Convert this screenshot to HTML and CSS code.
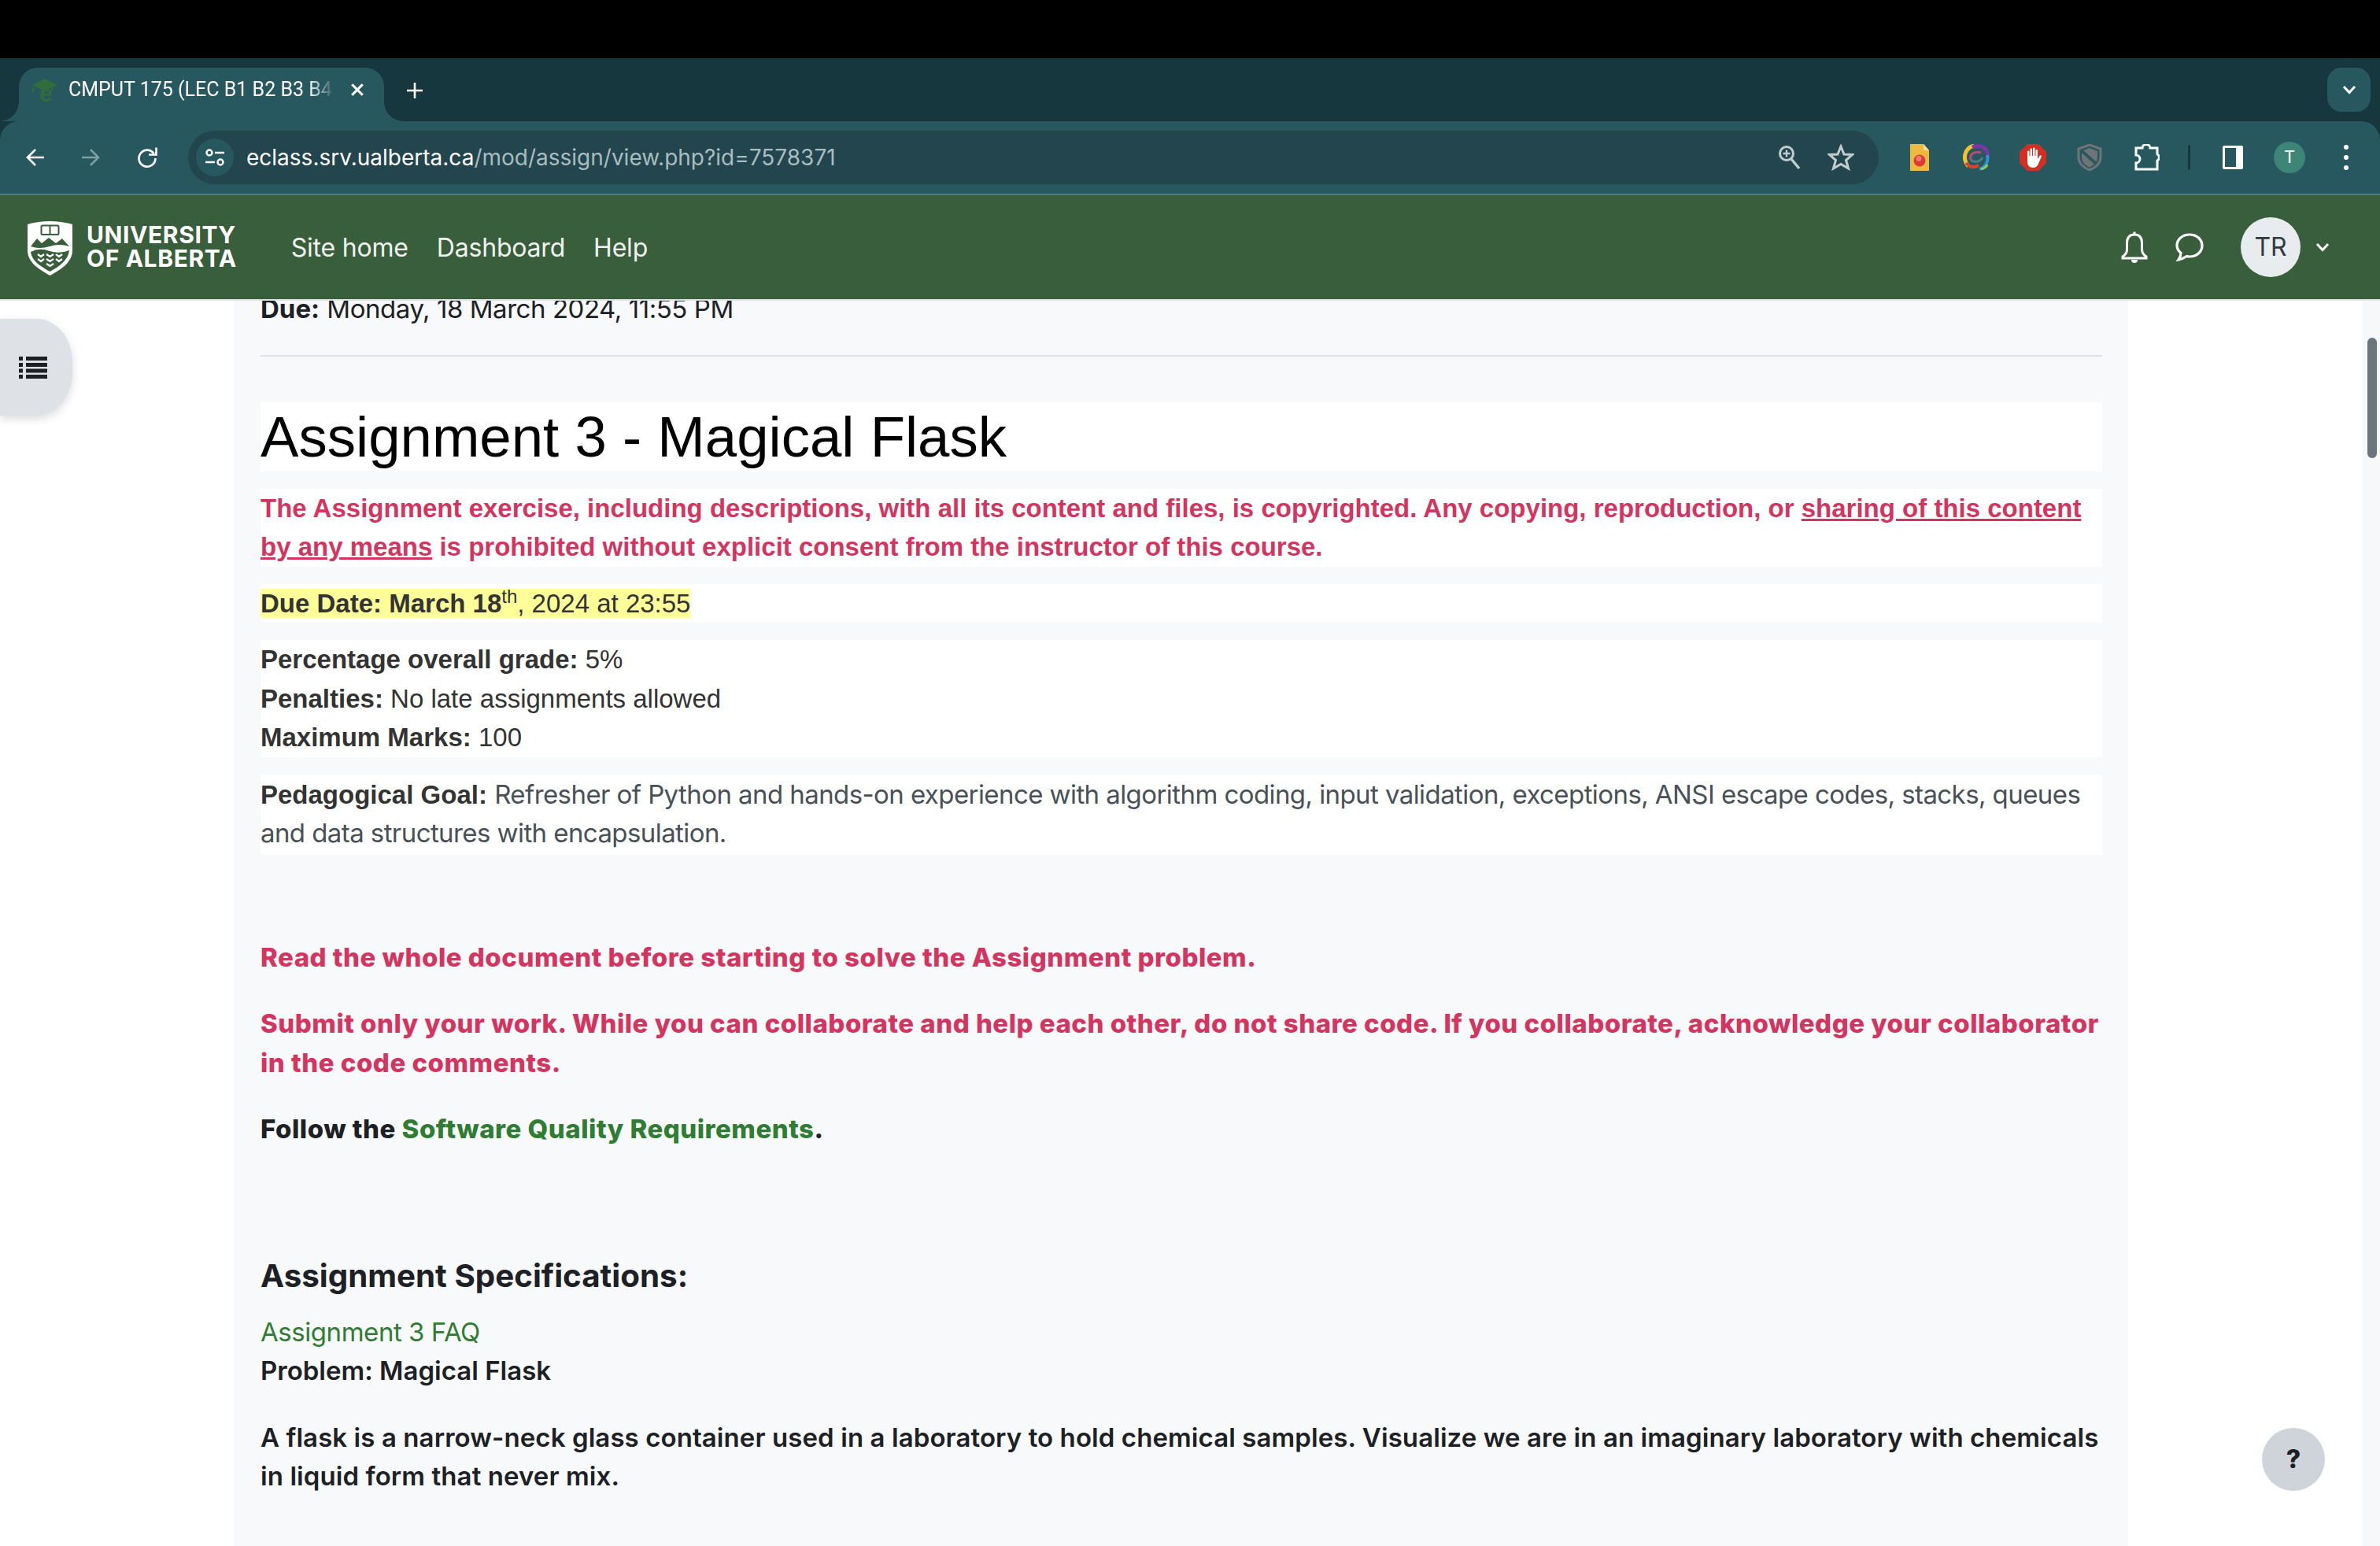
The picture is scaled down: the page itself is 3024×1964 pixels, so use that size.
FILE: index.html
```html
<!DOCTYPE html>
<html lang="en">
<head>
<meta charset="utf-8">
<title>CMPUT 175</title>
<link rel="stylesheet" href="styles.css">
</head>
<body>
<div class="os-bar"></div>
<div class="chrome">
<div class="tabstrip">
  <div class="tab">
    <svg class="favicon" viewBox="0 0 34 30"><path d="M17 1 33 9 27 12V17H25V13L17 17 8 12.500 1 9Z" fill="#2f6d3a"/><path d="M2 12V18" stroke="#2f6d3a" stroke-width="2"/></svg>
    <span class="fav-e">e</span>
    <span class="tab-title">CMPUT 175 (LEC B1 B2 B3 B4 B5 X01 X02)</span>
    <svg class="tab-close" viewBox="0 0 16 16"><path d="M2 2 14 14M14 2 2 14" stroke="#fff" stroke-width="2.800"/></svg>
  </div>
  <svg class="new-tab" viewBox="0 0 22 22"><path d="M11 1V21M1 11H21" stroke="#fff" stroke-width="2.600"/></svg>
  <div class="tab-search"><svg class="chev" viewBox="0 0 18 12"><path d="M2 2 9 9.500 16 2" fill="none" stroke="#fff" stroke-width="3"/></svg></div>
</div>
<div class="toolbar">
  <svg class="tb-icon back" viewBox="0 0 26 26"><path d="M24 13H3M13 3 3 13 13 23" fill="none" stroke="#fff" stroke-width="2.600"/></svg>
  <svg class="tb-icon fwd" viewBox="0 0 26 26"><path d="M2 13H23M13 3 23 13 13 23" fill="none" stroke="#7f9ea1" stroke-width="2.600"/></svg>
  <svg class="tb-icon reload" viewBox="0 0 26 26"><path d="M21.500 8A10.500 10.500 0 1 0 23.500 14" fill="none" stroke="#fff" stroke-width="2.600"/><path d="M15 9.500H24.500V0.500" fill="none" stroke="#fff" stroke-width="2.600"/></svg>
  <div class="omnibox">
    <div class="site-chip"><svg viewBox="0 0 26 22" class="chip-icon"><circle cx="6" cy="5" r="3.500" fill="none" stroke="#fff" stroke-width="2.400"/><path d="M13 5H25M1 17H13" stroke="#fff" stroke-width="2.600"/><circle cx="20" cy="17" r="3.500" fill="none" stroke="#fff" stroke-width="2.400"/></svg></div>
    <div class="url"><span class="host">eclass.srv.ualberta.ca</span><span class="path">/mod/assign/view.php?id=7578371</span></div>
    <svg class="omni-icon" viewBox="0 0 30 32"><circle cx="11" cy="11" r="8.500" fill="none" stroke="#c3cccd" stroke-width="3"/><path d="M17 18 27 30" stroke="#c3cccd" stroke-width="3.400"/><path d="M11 6.500V15.500M6.500 11H15.500" stroke="#c3cccd" stroke-width="2.400"/></svg>
    <svg class="omni-icon star" viewBox="0 0 34 34"><path d="M17 3 21 13 31.500 13.500 23.500 20.500 26.500 31 17 25.500 7.500 31 10.500 20.500 2.500 13.500 13 13Z" fill="none" stroke="#c3cccd" stroke-width="3"/></svg>
  </div>
  <div class="extensions">
    <svg class="ext" viewBox="0 0 34 34"><path d="M5 0H22L29 8V34H5Z" fill="#eeb93f"/><path d="M22 0 29 8H22Z" fill="#f6dc98"/><circle cx="17" cy="21" r="7.500" fill="#dd3a35"/><circle cx="16" cy="18.500" r="3.500" fill="#ee7a72"/></svg>
    <svg class="ext" viewBox="0 0 34 34"><path d="M7 28C-1 19 2 5 14 2" fill="none" stroke="#f2c32c" stroke-width="5"/><path d="M4 24C9 30 15 30 20 27" fill="none" stroke="#d8452f" stroke-width="4"/><path d="M12 4C21 0 33 5 31 15" fill="none" stroke="#7a37a8" stroke-width="5"/><path d="M31 14C33 22 29 29 21 32" fill="none" stroke="#2f93d6" stroke-width="4"/><path d="M23 32C27 31 30 29 31 26" fill="none" stroke="#8bd05c" stroke-width="3"/><path d="M10 20C8 12 15 9 23 11" fill="none" stroke="#b54a7c" stroke-width="3"/><path d="M10 20C14 24 22 23 25 17" fill="none" stroke="#4b7e86" stroke-width="3"/></svg>
    <svg class="ext" viewBox="0 0 34 34"><path d="M10 0H24L34 10V24L24 34H10L0 24V10Z" fill="#d33023"/><path d="M10 17V9.500C10 8 12.500 8 12.500 9.500V15H13.500V6.500C13.500 5 16 5 16 6.500V15H17V5.500C17 4 19.500 4 19.500 5.500V15H20.500V8C20.500 6.500 23 6.500 23 8V19L25.500 15C26.500 13.500 28.500 14.500 27.800 16L24 25C23 28 20.500 30 17 30C12.500 30 10 27 10 23Z" fill="#fff"/></svg>
    <svg class="ext" viewBox="0 0 34 34"><path d="M17 1 31 6V17C31 25 24 30 17 33 10 30 3 25 3 17V6Z" fill="none" stroke="#6f7476" stroke-width="3"/><path d="M17 5 27 9V17C27 19 26.500 21 25.500 22.500L9 8Z" fill="#6f7476"/><path d="M8 12 23 25.500C21 27 19 28.500 17 29.500 11 27 7 22.500 7 17V12Z" fill="#6f7476"/></svg>
    <svg class="ext" viewBox="0 0 34 34"><path d="M4 5H12A5 4.500 0 0 1 22 5H31V13A4.500 4.500 0 0 1 31 21V32H4V24A5 5 0 0 0 4 14Z" fill="none" stroke="#fff" stroke-width="3"/></svg>
    <div class="tb-divider"></div>
    <svg class="ext side" viewBox="0 0 30 34"><rect x="2" y="2" width="26" height="30" rx="2" fill="#fff"/><rect x="5" y="5" width="14" height="24" fill="#27575f"/></svg>
    <div class="profile">T</div>
    <svg class="menu-dots" viewBox="0 0 8 34"><circle cx="4" cy="4" r="3" fill="#fff"/><circle cx="4" cy="17" r="3" fill="#fff"/><circle cx="4" cy="30" r="3" fill="#fff"/></svg>
  </div>
</div>
</div>
<header class="sitebar">
  <div class="brand">
    <svg class="shield" viewBox="0 0 57 70">
      <path d="M0 5Q28 -3 57 5V38C57 54 41 63 28.500 70 16 63 0 54 0 38Z" fill="#fff"/>
      <rect x="17.500" y="6.500" width="22" height="11.500" rx="1.500" fill="none" stroke="#385e3b" stroke-width="2"/>
      <path d="M28.500 7V18" stroke="#385e3b" stroke-width="2"/>
      <path d="M4 33 12 23 18 29 27 22 36 29 44 23 53 33Q40 29 28 33 15 37 4 33Z" fill="#385e3b"/>
      <path d="M4 40Q15 34 28 39 41 43 53 38C52 50 40 59 28.500 65 17 59 5 51 4 40Z" fill="#385e3b"/>
      <path d="M13 43 17 46 21 43M24 43 28.500 46 33 43M36 43 40 46 44 43M13 49 17 52 21 49M24 49 28.500 52 33 49M36 49 40 52 44 49M24 55 28.500 58 33 55" fill="none" stroke="#fff" stroke-width="2.200"/>
    </svg>
    <div class="wordmark"><span>UNIVERSITY</span><span>OF ALBERTA</span></div>
  </div>
  <nav class="mainnav"><a>Site home</a><a>Dashboard</a><a>Help</a></nav>
  <div class="user-tools">
    <svg class="bell" viewBox="0 0 36 42"><path d="M18 1.500V5M18 5C11 5 8.500 10 8.500 16V24C8.500 28 6 31 3 33V35H33V33C30 31 27.500 28 27.500 24V16C27.500 10 25 5 18 5Z" fill="none" stroke="#fff" stroke-width="3"/><path d="M14 37A4 4 0 0 0 22 37Z" fill="#fff"/></svg>
    <svg class="chat" viewBox="0 0 38 38"><path d="M19 3C10 3 3 9 3 17C3 21 5 24 8 26.500C8 29 7 32 5 35C10 34 13 32 15.500 30.500C17 31 18 31 19 31C28 31 35 25 35 17C35 9 28 3 19 3Z" fill="none" stroke="#fff" stroke-width="3.200"/></svg>
    <div class="avatar">TR</div>
    <svg class="user-caret" viewBox="0 0 18 12"><path d="M2 2 9 9.500 16 2" fill="none" stroke="#fff" stroke-width="3"/></svg>
  </div>
</header>
<main class="viewport">
  <button class="drawer-toggle"><svg viewBox="0 0 36 28" class="drawer-icon"><path d="M0 2.500H5M9 2.500H36M0 10.500H5M9 10.500H36M0 18H5M9 18H36M0 25.500H5M9 25.500H36" stroke="#1d2125" stroke-width="5"/></svg></button>
  <article class="page">
    <p class="due"><b>Due:</b> <span class="thin">Monday, 18 March 2024, 11:55 PM</span></p>
    <hr class="rule">
    <h1 class="title block">Assignment 3 - Magical Flask</h1>
    <p class="notice block">The Assignment exercise, including descriptions, with all its content and files, is copyrighted. Any copying, reproduction, or <u>sharing of this content by any means</u> is prohibited without explicit consent from the instructor of this course.</p>
    <p class="helv block"><span class="mark"><b>Due Date: March 18<sup>th</sup></b>, 2024 at 23:55</span></p>
    <p class="helv block"><b>Percentage overall grade:</b> 5%<br><b>Penalties:</b> No late assignments allowed<br><b>Maximum Marks:</b> 100</p>
    <p class="goal block"><b class="goal-label">Pedagogical Goal:</b> <span class="goal-text thin">Refresher of Python and hands-on experience with algorithm coding, input validation, exceptions, ANSI escape codes, stacks, queues and data structures with encapsulation.</span></p>
    <p class="strong red first">Read the whole document before starting to solve the Assignment problem.</p>
    <p class="strong red">Submit only your work. While you can collaborate and help each other, do not share code. If you collaborate, acknowledge your collaborator in the code comments.</p>
    <p class="strong">Follow the <a class="link">Software Quality Requirements</a>.</p>
    <h2 class="spec">Assignment Specifications:</h2>
    <p class="problem"><a class="link regular thin">Assignment 3 FAQ</a><br><span class="semi">Problem: Magical Flask</span></p>
    <p class="semi flask">A flask is a narrow-neck glass container used in a laboratory to hold chemical samples. Visualize we are in an imaginary laboratory with chemicals in liquid form that never mix.</p>
  </article>
  <button class="help-btn">?</button>
  <div class="scrollbar"><div class="thumb"></div></div>
</main>
</body>
</html>
```
FILE: styles.css
```css
* { box-sizing: border-box; }
html, body { margin: 0; height: 100%; }
body { width: 3024px; height: 1964px; overflow: hidden; background: #fff; font-family: "Inter", "Liberation Sans", sans-serif; display: flex; flex-direction: column; }

.os-bar { height: 74px; background: #000; flex: none; }
.chrome { background: #17373f; flex: none; }

.tabstrip { height: 80px; display: flex; align-items: flex-end; padding-left: 24px; position: relative; }
.tab { width: 464px; height: 68px; background: #27585f; border-radius: 24px 24px 0 0; position: relative; display: flex; align-items: center; padding: 0 0 12px 16px; color: #fff; }
.tab::before, .tab::after { content: ""; position: absolute; bottom: 0; width: 24px; height: 24px; }
.tab::before { left: -24px; background: radial-gradient(circle at 0 0, transparent 23.500px, #27585f 24px); }
.tab::after { right: -24px; background: radial-gradient(circle at 100% 0, transparent 23.500px, #27585f 24px); }
.favicon { width: 34px; height: 30px; flex: none; }
.fav-e { position: absolute; left: 26px; top: 18px; font: 700 30px/30px "Liberation Sans", sans-serif; color: #2f6d3a; }
.tab-title { margin-left: 13px; width: 338px; white-space: nowrap; overflow: hidden; font: 400 25px/34px "Roboto", sans-serif; -webkit-mask-image: linear-gradient(90deg, #000 90%, transparent 100%); mask-image: linear-gradient(90deg, #000 90%, transparent 100%); }
.tab-close { width: 18px; height: 18px; margin-left: 20px; flex: none; }
.new-tab { width: 22px; height: 22px; margin-left: 28px; margin-bottom: 28px; flex: none; }
.tab-search { width: 55px; height: 56px; background: #27585f; border-radius: 18px; margin-left: auto; margin-right: 12px; margin-bottom: 12px; display: flex; align-items: center; justify-content: center; }
.chev { width: 18px; height: 12px; }

.toolbar { height: 94px; background: #27585f; border-bottom: 2px solid #4b7b85; border-radius: 24px 24px 0 0; display: flex; align-items: center; position: relative; padding-left: 32px; }
.tb-icon { width: 26px; height: 26px; flex: none; }
.fwd { margin-left: 44px; }
.reload { margin-left: 46px; }
.omnibox { width: 2148px; height: 68px; margin-left: 39px; background: #22454e; border-radius: 34px; display: flex; align-items: center; padding-left: 10px; flex: none; }
.site-chip { width: 48px; height: 48px; border-radius: 50%; background: #27585f; display: flex; align-items: center; justify-content: center; flex: none; }
.chip-icon { width: 26px; height: 22px; }
.url { margin-left: 16px; font: 400 28px/34px "Inter", sans-serif; white-space: nowrap; flex: 1; }
.host { color: #fff; }
.path { color: #a9bcbf; }
.omni-icon { width: 30px; height: 32px; flex: none; }
.star { width: 34px; height: 34px; margin-left: 33px; margin-right: 31px; }
.extensions { display: flex; align-items: center; margin-left: 35px; flex: none; }
.ext { width: 34px; height: 34px; flex: none; margin-right: 38px; }
.tb-divider { width: 3px; height: 32px; background: #17373f; border-radius: 2px; margin-left: -2px; margin-right: 39px; flex: none; }
.side { width: 30px; margin-right: 37px; }
.profile { width: 40px; height: 40px; border-radius: 50%; background: #3d8577; color: #fff; font: 400 22px/40px "Roboto", sans-serif; text-align: center; flex: none; margin-right: 48px; }
.menu-dots { width: 8px; height: 34px; flex: none; }

.sitebar { height: 132px; background: #385e3b; flex: none; display: flex; align-items: center; padding-left: 35px; padding-right: 64px; box-shadow: 0 2px 0 #dee2e6; position: relative; z-index: 3; }
.brand { display: flex; align-items: center; gap: 18px; margin-top: 2px; }
.shield { width: 57px; height: 70px; flex: none; }
.wordmark { display: flex; flex-direction: column; color: #fff; font: 700 30px/30px "Inter", sans-serif; letter-spacing: .6px; margin-top: -4px; }
.mainnav { display: flex; gap: 36px; margin-left: 69px; color: #f0f3f0; font: 400 32px/48px "Inter", sans-serif; letter-spacing: -.2px; padding-top: 2px; }
.user-tools { margin-left: auto; display: flex; align-items: center; }
.bell { width: 36px; height: 42px; }
.chat { width: 38px; height: 38px; margin-left: 33px; }
.avatar { width: 76px; height: 76px; border-radius: 50%; background: #e9ecef; color: #343a40; font: 400 32px/76px "Inter", sans-serif; text-align: center; margin-left: 46px; }
.user-caret { width: 18px; height: 12px; margin-left: 19px; }

.viewport { flex: 1; min-height: 0; overflow: hidden; position: relative; padding-left: 297px; }
.page { width: 2407px; min-height: 1700px; background: #f8f9fa; padding: 0 33px 0 34px; color: #1d2125; font: 400 33px/49.500px "Inter", sans-serif; margin-top: -1px; }
.page p, .page h1, .page h2 { margin: 0; }
.page .due { margin-top: -12px; }
.thin { letter-spacing: -.45px; }
.goal-text.thin { letter-spacing: -.58px; }
.rule { border: 0; height: 2px; background: #dee2e6; margin: 33px 0 58px; }
.block { background: #fff; }
.page .title { font: 400 72.600px/88px "Liberation Sans", sans-serif; color: #000; margin-bottom: 22px; }
.page .notice { font: 700 33px/49.500px "Liberation Sans", sans-serif; color: #d43560; margin-bottom: 22px; }
.page .helv { font-family: "Liberation Sans", sans-serif; color: #333; margin-bottom: 22px; }
.mark { background: #ffff99; }
sup { font-size: 24px; line-height: 0; font-weight: 400; }
.page .goal { color: #333; padding: 1px 0 2px; }
.goal-label { font-family: "Liberation Sans", sans-serif; }
.goal-text { color: #495057; }
.page .strong { font-weight: 800; letter-spacing: .5px; margin-bottom: 35px; }
.page .first { margin-top: 106px; }
.red { color: #d43560; }
.link { color: #2e7d32; }
.regular { font-weight: 400; }
.page .spec { font: 700 40.300px/48px "Inter", sans-serif; margin-top: 137px; margin-bottom: 23px; }
.semi { font-weight: 600; }
.flask { letter-spacing: .08px; }
.page .problem { margin-bottom: 35px; }

.drawer-toggle { position: absolute; left: 0; top: 25px; width: 92px; height: 123px; border: 0; border-radius: 0 46px 46px 0 / 0 55px 55px 0; background: #dee2e6; box-shadow: 0 4px 12px rgba(0,0,0,.14); padding: 0 0 0 24px; display: flex; align-items: center; z-index: 2; }
.drawer-icon { width: 36px; height: 28px; }
.help-btn { position: absolute; left: 2874px; top: 1434px; width: 80px; height: 80px; border: 0; border-radius: 50%; background: #ced4da; color: #1d2125; font: 800 32px/80px "Inter", sans-serif; padding: 0; }
.scrollbar { position: absolute; right: 0; top: 0; bottom: 0; width: 22px; background: #f7f8fa; }
.thumb { width: 12px; height: 153px; margin: 49px 0 0 6px; border-radius: 6px; background: #6c757d; }
```
